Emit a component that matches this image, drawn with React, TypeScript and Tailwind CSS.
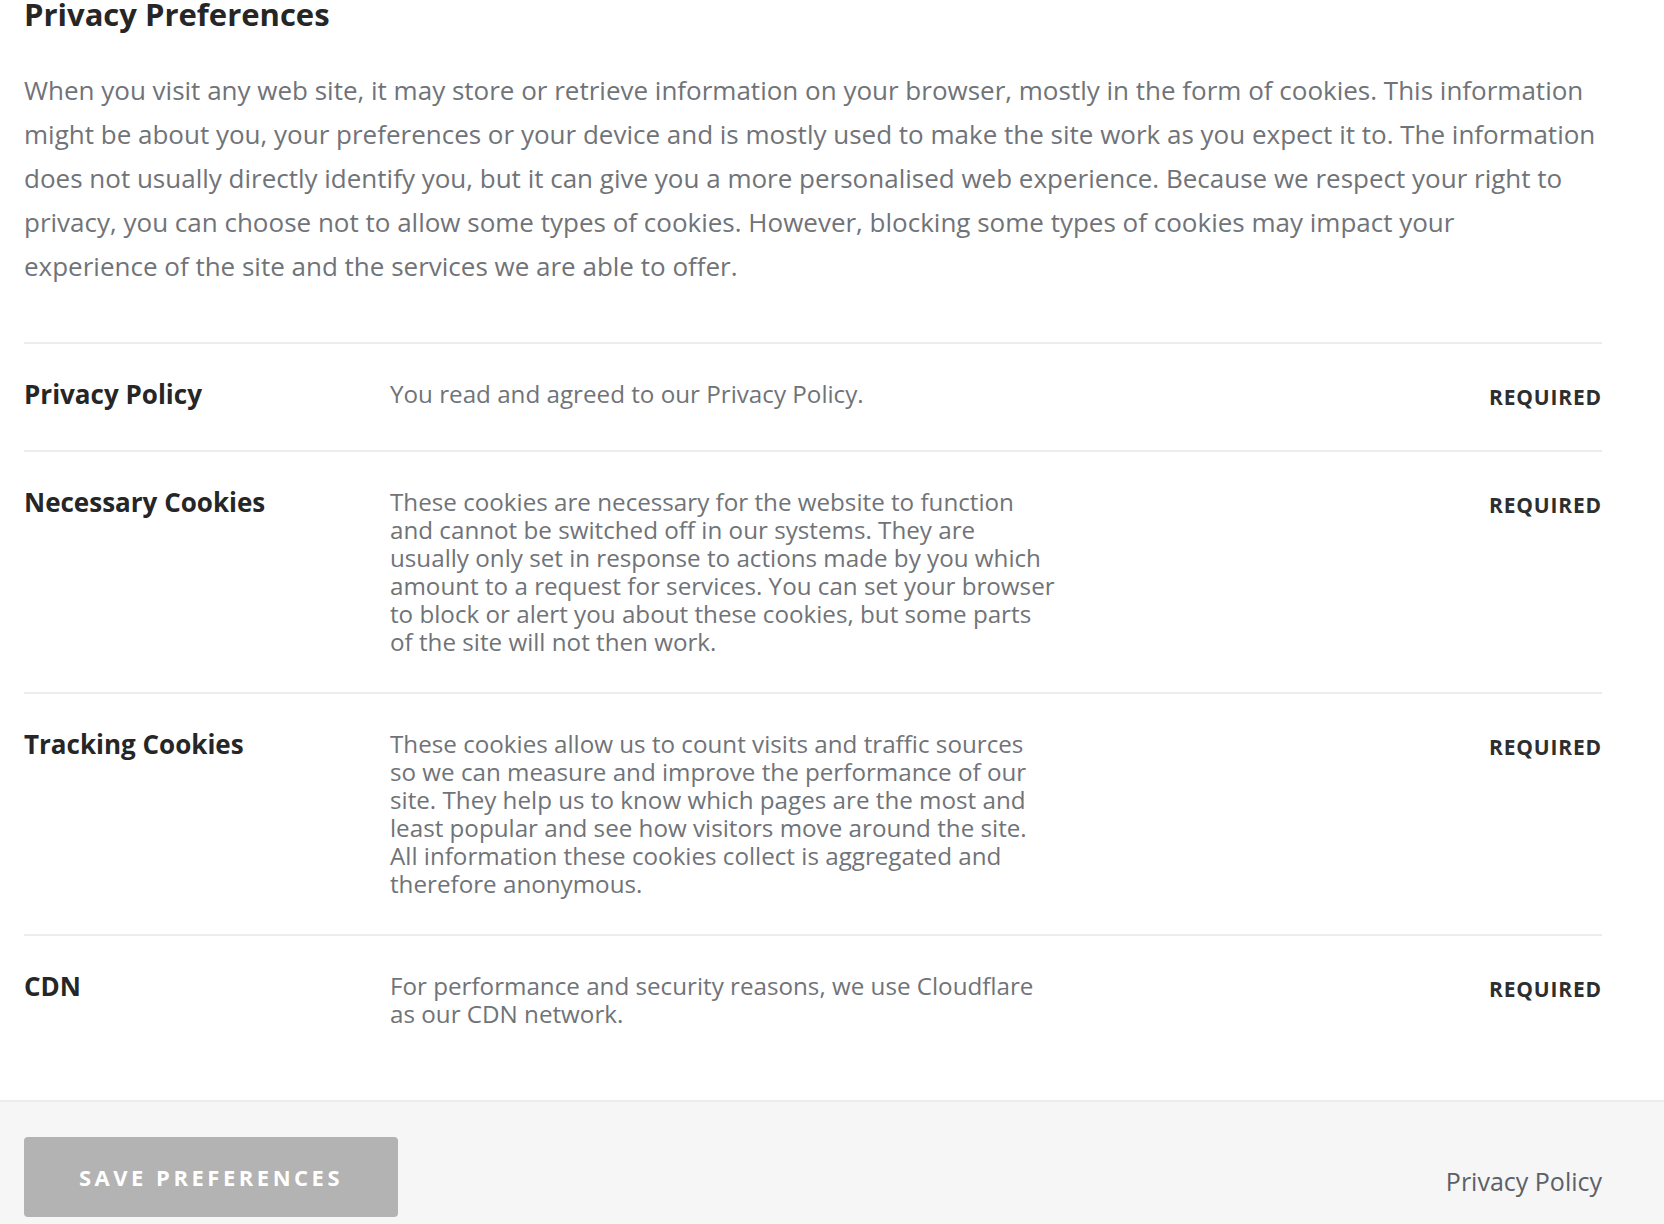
const intro = [
  "When you visit any web site, it may store or retrieve information on your browser, mostly in the form of cookies. This information",
  "might be about you, your preferences or your device and is mostly used to make the site work as you expect it to. The information",
  "does not usually directly identify you, but it can give you a more personalised web experience. Because we respect your right to",
  "privacy, you can choose not to allow some types of cookies. However, blocking some types of cookies may impact your",
  "experience of the site and the services we are able to offer.",
];

const rows = [
  {
    title: "Privacy Policy",
    lines: ["You read and agreed to our Privacy Policy."],
  },
  {
    title: "Necessary Cookies",
    lines: [
      "These cookies are necessary for the website to function",
      "and cannot be switched off in our systems. They are",
      "usually only set in response to actions made by you which",
      "amount to a request for services. You can set your browser",
      "to block or alert you about these cookies, but some parts",
      "of the site will not then work.",
    ],
  },
  {
    title: "Tracking Cookies",
    lines: [
      "These cookies allow us to count visits and traffic sources",
      "so we can measure and improve the performance of our",
      "site. They help us to know which pages are the most and",
      "least popular and see how visitors move around the site.",
      "All information these cookies collect is aggregated and",
      "therefore anonymous.",
    ],
  },
  {
    title: "CDN",
    lines: [
      "For performance and security reasons, we use Cloudflare",
      "as our CDN network.",
    ],
  },
];

function Lines({ lines }: { lines: string[] }) {
  return (
    <>
      {lines.map((line, i) => (
        <span key={i} className="block whitespace-nowrap">
          {line}
        </span>
      ))}
    </>
  );
}

export default function App() {
  return (
    <div className="flex min-h-screen flex-col bg-white font-['Open_Sans',sans-serif]">
      <div className="pr-[62px] pl-6 pb-9">
        <h1 className="text-[31px] leading-[28px] font-bold text-[#262626]">
          Privacy Preferences
        </h1>
        <p className="mt-10 text-[26px] leading-[44px] text-[#707378]">
          <Lines lines={intro} />
        </p>

        <ul className="mt-[54px]">
          {rows.map((row) => (
            <li
              key={row.title}
              className="flex items-start border-t-2 border-[#ececec] py-9"
            >
              <span className="w-[366px] shrink-0 text-[26px] leading-[28px] font-bold text-[#262626]">
                {row.title}
              </span>
              <p className="w-[680px] text-[24.2px] leading-[28px] text-[#707378]">
                <Lines lines={row.lines} />
              </p>
              <span className="ml-auto text-[21px] leading-[34px] font-bold tracking-[0.04em] text-[#2e2e2e]">
                REQUIRED
              </span>
            </li>
          ))}
        </ul>
      </div>

      <footer className="flex grow items-start justify-between border-t-2 border-[#ececec] bg-[#f6f6f6] pt-[35px] pr-[62px] pl-6 pb-2">
        <button
          type="button"
          className="flex h-20 w-[374px] items-center justify-center rounded bg-[#b3b3b3] text-[22px] font-bold uppercase tracking-[0.16em] text-white"
        >
          Save preferences
        </button>
        <a className="mt-7 text-[25px] leading-[32px] text-[#5c6068]">
          Privacy Policy
        </a>
      </footer>
    </div>
  );
}
